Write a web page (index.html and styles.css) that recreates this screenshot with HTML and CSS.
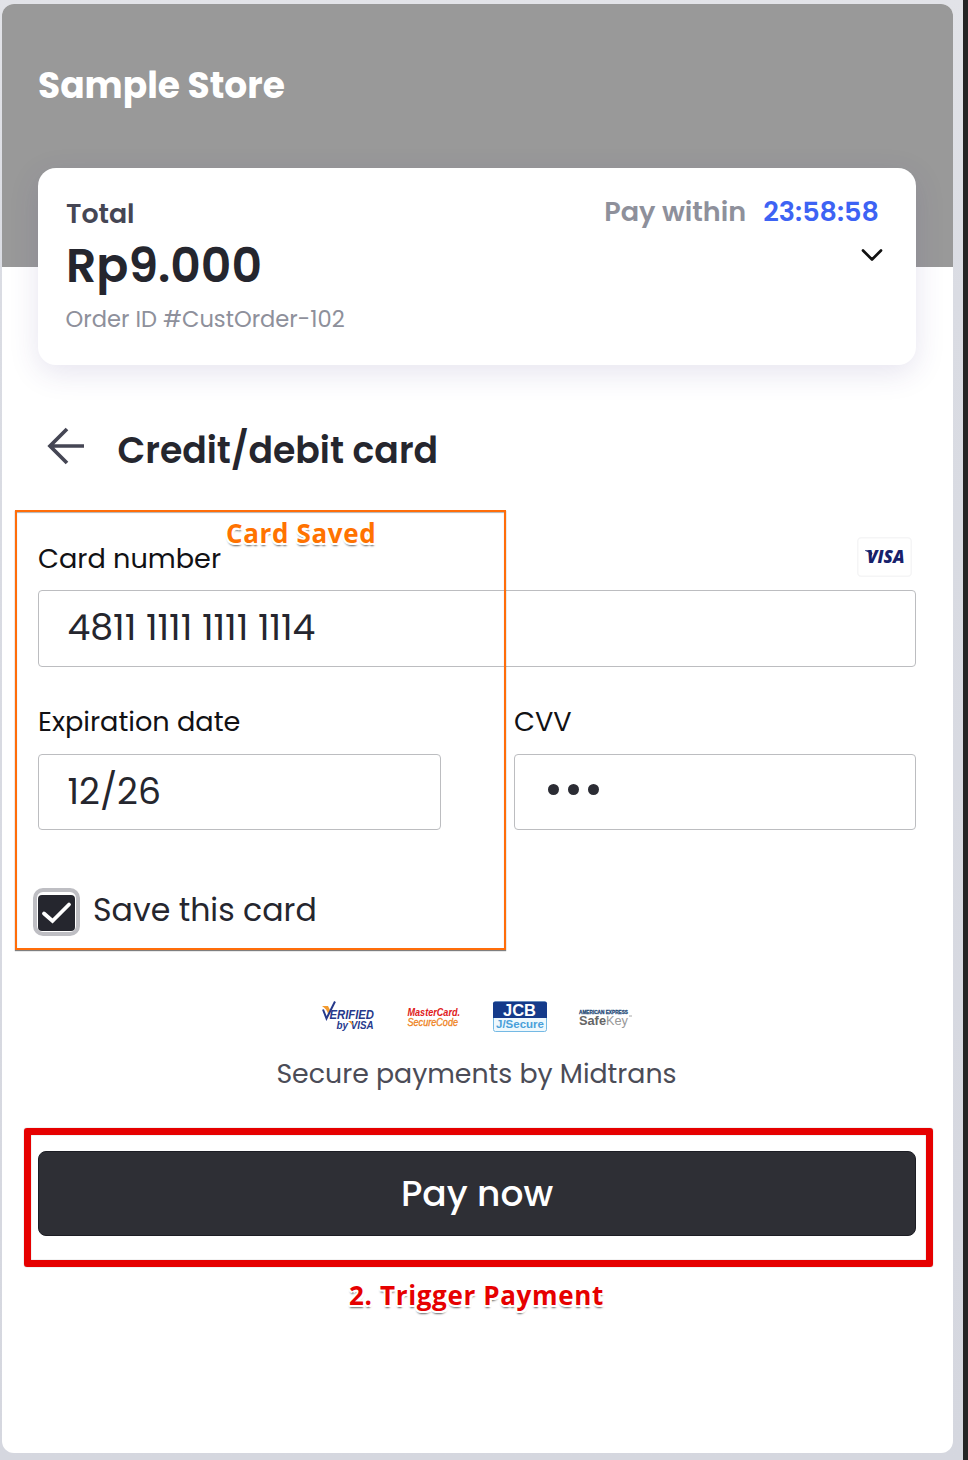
FILE: index.html
```html
<!DOCTYPE html>
<html lang="en">
<head>
<meta charset="utf-8">
<title>Sample Store - Payment</title>
<link rel="stylesheet" href="styles.css">
</head>
<body>
<main class="sheet">
  <header class="hero"><h1 class="store">Sample Store</h1></header>
  <section class="summary">
    <div class="amounts">
      <div class="total-label">Total</div>
      <div class="total">Rp9.000</div>
      <div class="order">Order ID #CustOrder-102</div>
    </div>
    <div class="deadline">
      <div class="timer"><span class="within">Pay within</span><span class="time">23:58:58</span></div>
      <svg class="chevron" width="24" height="16" viewBox="0 0 24 16"><path d="M3 3.500 12 12.500 21 3.500" fill="none" stroke="#111" stroke-width="2.700" stroke-linecap="round" stroke-linejoin="round"/></svg>
    </div>
  </section>
  <div class="title-row">
    <svg class="back" width="38" height="38" viewBox="0 0 38 38"><path d="M37 19H3M20 2 3 19 20 36" fill="none" stroke="#454654" stroke-width="3.700"/></svg>
    <h2 class="title">Credit/debit card</h2>
  </div>
  <form class="form">
    <div class="label-row">
      <label class="label">Card number</label>
      <svg class="visa" width="55" height="40" viewBox="0 0 55 40"><rect x=".75" y=".75" width="53.500" height="38.500" rx="3.500" fill="#fff" stroke="#f5f5f6" stroke-width="1.500"/><path d="M8 13.200h5.500l2 3-1 2.500q-1.500-3.500-6.500-5z" fill="#17216b"/><text x="10" y="25.700" textLength="37.500" lengthAdjust="spacingAndGlyphs" class="visa-text">VISA</text></svg>
    </div>
    <div class="field">4811 1111 1111 1114</div>
    <div class="columns">
      <div class="column"><label class="label">Expiration date</label><div class="field expiry">12/26</div></div>
      <div class="column"><label class="label">CVV</label><div class="field dots"><i></i><i></i><i></i></div></div>
    </div>
    <div class="save">
      <div class="check"><svg width="37" height="36" viewBox="0 0 37 36"><path d="M6 18.500 14.500 26 31 9.500" fill="none" stroke="#fff" stroke-width="3.800" stroke-linecap="round"/></svg></div>
      <span class="save-text">Save this card</span>
    </div>
  </form>
  <div class="badges">
    <svg width="56" height="32" viewBox="0 0 56 32" class="badge"><path d="M2 5h6l2 4-2 4q-1-5-6-8z" fill="#f39a2e"/><path d="M3 8.500 6.500 17.500 15 .5" fill="none" stroke="#26398b" stroke-width="2"/><text x="9.500" y="17.500" textLength="44.500" lengthAdjust="spacingAndGlyphs" class="verified">ERIFIED</text><text x="16.500" y="28.300" textLength="37" lengthAdjust="spacingAndGlyphs" class="by">by VISA</text><path d="M28 20h3l2 3-1 1q-1-2-4-4z" fill="#f39a2e"/></svg>
    <svg width="56" height="32" viewBox="0 0 56 32" class="badge"><text x="1.500" y="15" textLength="52.500" lengthAdjust="spacingAndGlyphs" class="mc">MasterCard.</text><text x="1.500" y="25.200" textLength="50.500" lengthAdjust="spacingAndGlyphs" class="sc">SecureCode</text></svg>
    <svg width="56" height="32" viewBox="0 0 56 32" class="badge"><rect x="1.500" y="1" width="53" height="29.500" rx="2" fill="#eef8fd" stroke="#74b9e4"/><path d="M1 17V2.500Q1 .500 3 .500H53Q55 .500 55 2.500V17z" fill="#143a8a"/><text x="11" y="14.500" textLength="33" lengthAdjust="spacingAndGlyphs" class="jcb">JCB</text><text x="4" y="26.800" textLength="48" lengthAdjust="spacingAndGlyphs" class="js">J/Secure</text></svg>
    <svg width="56" height="32" viewBox="0 0 56 32" class="badge"><text x="1" y="13.300" textLength="49" lengthAdjust="spacingAndGlyphs" class="amex">AMERICAN EXPRESS</text><text x="1" y="24" textLength="49" lengthAdjust="spacingAndGlyphs" class="safe">Safe<tspan class="key">Key</tspan></text><path d="M51 15h3" stroke="#aaa"/></svg>
  </div>
  <p class="secure">Secure payments by Midtrans</p>
  <button class="pay">Pay now</button>
  <div class="mark saved-mark"><span class="saved-text">Card Saved</span></div>
  <div class="mark pay-mark"></div>
  <div class="pay-note">2. Trigger Payment</div>
</main>
</body>
</html>
```
FILE: styles.css
```css
* { box-sizing: border-box; }
body {
  margin: 0;
  width: 968px;
  height: 1460px;
  padding: 4px 0 0 2px;
  overflow: hidden;
  position: relative;
  background: linear-gradient(to right, transparent 963px, #252525 963px), linear-gradient(#e2e3e8, #dadce3 20%, #d5d7df);
  font-family: Poppins, Inter, sans-serif;
  color: #25262e;
}
h1, h2, p { margin: 0; }
.sheet {
  width: 951px;
  height: 1449px;
  background: #fff;
  border-radius: 12px;
  position: relative;
}
.hero { height: 263px; padding: 57px 36px; background: #999; border-radius: 12px 12px 0 0; }
.store { font-size: 36px; line-height: 49px; font-weight: 700; color: #fff; }
.summary {
  display: flex;
  justify-content: space-between;
  position: relative;
  width: 878px;
  height: 197px;
  margin: -99px 0 0 36px;
  padding: 25px 37px 0 28px;
  border-radius: 18px;
  background: #fff;
  box-shadow: 0 8px 30px rgba(60, 50, 130, .13);
}
.total-label { font-size: 26.800px; line-height: 42px; font-weight: 600; color: #454654; }
.total { font-size: 47.300px; line-height: 61px; font-weight: 600; }
.order { font-size: 22.600px; line-height: 46px; margin-left: -.5px; color: #8e909b; }
.deadline { display: flex; flex-direction: column; align-items: flex-end; }
.timer { display: flex; gap: 17px; font-size: 27.100px; line-height: 37px; font-weight: 600; }
.within { color: #8e909b; }
.time { color: #3d63f4; }
.chevron { margin: 17px -4.500px 0 0; }
.title-row { display: flex; align-items: center; gap: 32px; height: 48px; margin: 61px 0 0 45px; }
.back { margin-top: -8px; }
.title { padding: 1px 0 0 .500px; font-size: 36.200px; line-height: 48px; font-weight: 600; }
.form { padding: 0 37px 0 36px; }
.label-row { display: flex; align-items: center; justify-content: space-between; height: 40px; margin-top: 64px; padding-right: 4px; }
.visa { margin-top: -2px; }
.label { display: block; font-size: 27.150px; line-height: 41px; color: #111114; }
.field { display: flex; align-items: center; height: 77px; padding: 0 28px 1px 28.500px; border: 1.500px solid #bcbdc0; border-radius: 4px; font-size: 36.200px; line-height: 48px; }
.label-row + .field { margin-top: 12px; }
.columns { display: grid; grid-template-columns: 403px 402px; gap: 73px; margin-top: 34px; }
.column .field { height: 76px; margin-top: 12px; }
.dots { gap: 9px; padding-left: 33px; padding-bottom: 6px; }
.dots i { width: 11px; height: 11px; border-radius: 50%; background: #2b2c34; }
.save { display: flex; align-items: center; gap: 13px; height: 48px; margin: 58px 0 0 -5px; font-size: 31.600px; line-height: 44px; }
.save-text { margin-top: -5px; }
.check { width: 47px; height: 48px; padding: 3px 1px; border: 4px solid #bebec3; border-radius: 10px; }
.check svg { display: block; border-radius: 4px; background: #25262e; }
.badges { display: flex; justify-content: center; gap: 30px; margin: 65px 2px 0 0; }
.badge { overflow: visible; }
.visa-text { font: italic 800 17px "Open Sans", sans-serif; fill: #17216b; }
.verified { font: italic 700 12px "Liberation Sans", sans-serif; fill: #26398b; }
.by { font: italic 700 10.500px "Liberation Sans", sans-serif; fill: #26398b; }
.mc { font: italic 700 10.500px "Liberation Sans", sans-serif; fill: #e02020; }
.sc { font: italic 400 10px "Liberation Sans", sans-serif; fill: #ee8322; stroke: #ee8322; stroke-width: .3px; }
.jcb { font: 700 16px "Liberation Sans", sans-serif; fill: #fff; }
.js { font: 700 10.500px "Liberation Sans", sans-serif; fill: #4aa0da; }
.amex { font: 700 5px "Liberation Sans", sans-serif; fill: #264a78; stroke: #264a78; stroke-width: .3px; }
.safe { font: 700 13px "Liberation Sans", sans-serif; fill: #666; }
.key { font-weight: 400; fill: #999; }
.secure { margin: 20px 2px 0 0; text-align: center; font-size: 26.800px; line-height: 41px; color: #4b4c57; }
.pay { display: block; width: 878px; height: 85px; margin: 57px 0 0 36px; padding: 0; border: 1px solid #1c1d24; border-radius: 8px; background: #2e2f35; color: #fff; font: 500 36px/48px Poppins, Inter, sans-serif; }
.mark { position: absolute; }
.saved-mark { left: 13px; top: 506px; width: 491px; height: 440px; border: 2px solid #ff6d0a; box-shadow: 0 1px 1px rgba(0, 0, 0, .5), inset 0 1px 1px rgba(0, 0, 0, .3); }
.saved-text, .pay-note { font: 700 26px/30px "Open Sans", "Noto Sans", sans-serif; letter-spacing: .650px; text-shadow: -1px -1px 0 #fff, 2px -1px 0 #fff, -2px 1px 0 #fff, 2px 2px 0 #fff, -1px 2px 0 #fff, 0 3px 2px rgba(0, 0, 0, .6); }
.saved-text { position: absolute; left: 209px; top: 6px; white-space: nowrap; color: #ff7200; }
.pay-mark { left: 22px; top: 1124px; width: 909px; height: 139px; border: 7px solid #e60000; border-radius: 3px; box-shadow: 0 0 1px rgba(0, 0, 0, .5), inset 0 0 1px rgba(0, 0, 0, .5); }
.pay-note { position: absolute; left: 347px; top: 1276px; white-space: nowrap; color: #e60000; }
```
